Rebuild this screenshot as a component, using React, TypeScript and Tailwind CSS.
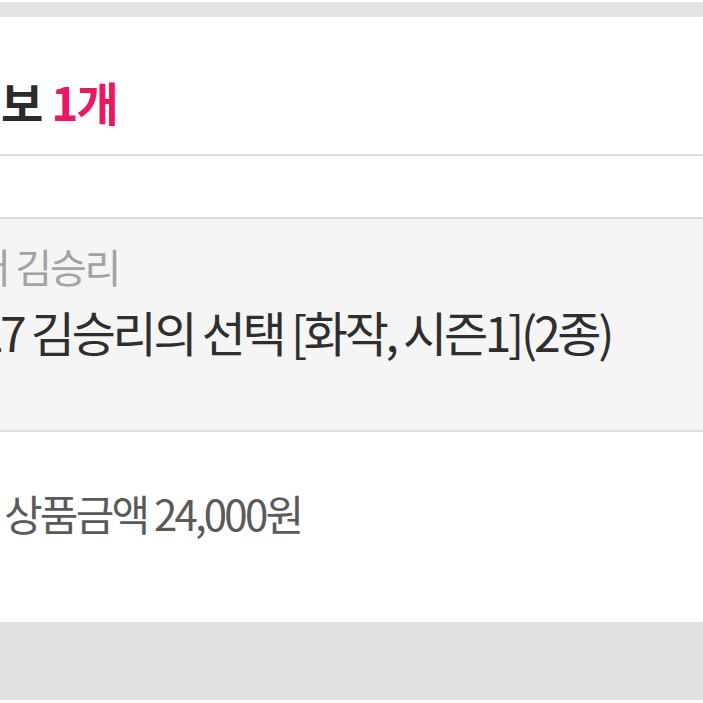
import React from 'react';

const font = { fontFamily: '"Noto Sans CJK KR", "Noto Sans", sans-serif' };

export default function App() {
  return (
    <div className="w-[703px] h-[703px] overflow-hidden bg-white" style={font}>
      <div className="h-[2px] bg-white" />
      <div className="h-[15px] bg-[#e3e3e3]" />

      {/* Section title */}
      <div className="h-[137px] flex items-center overflow-hidden pt-[30px]">
        <h2 className="whitespace-nowrap text-[46px] font-bold leading-none tracking-[-2px] text-[#2b2b2b]">
          <span className="ml-[1px]">보</span>
          <span className="ml-[10px] text-[#ec1663]">1개</span>
        </h2>
      </div>
      <div className="h-[2px] bg-[#dddddd]" />
      <div className="h-[61px] bg-white" />
      <div className="h-[2px] bg-[#dddddd]" />

      {/* Product card */}
      <div className="h-[211px] bg-[#f5f5f5] overflow-hidden pt-[22px]">
        <p className="whitespace-nowrap text-[40px] leading-[50px] tracking-[-2.2px] text-[#a3a3a3] ml-[-26px]">
          저 김승리
        </p>
        <p className="mt-[10px] whitespace-nowrap text-[48px] leading-[60px] tracking-[-3.3px] text-[#2e2e2e] ml-[-70px]">
          2027 김승리의 선택 [화작, 시즌1](2종)
        </p>
      </div>
      <div className="h-[2px] bg-[#dddddd]" />

      {/* Price summary */}
      <div className="h-[190px] bg-white flex items-center pb-[28px]">
        <p className="ml-[4px] whitespace-nowrap text-[42px] leading-none tracking-[-2.8px] text-[#5a5a5a]">
          상품금액 24,000원
        </p>
      </div>
      <div className="h-[78px] bg-[#e2e2e2]" />
      <div className="h-[3px] bg-white" />
    </div>
  );
}
